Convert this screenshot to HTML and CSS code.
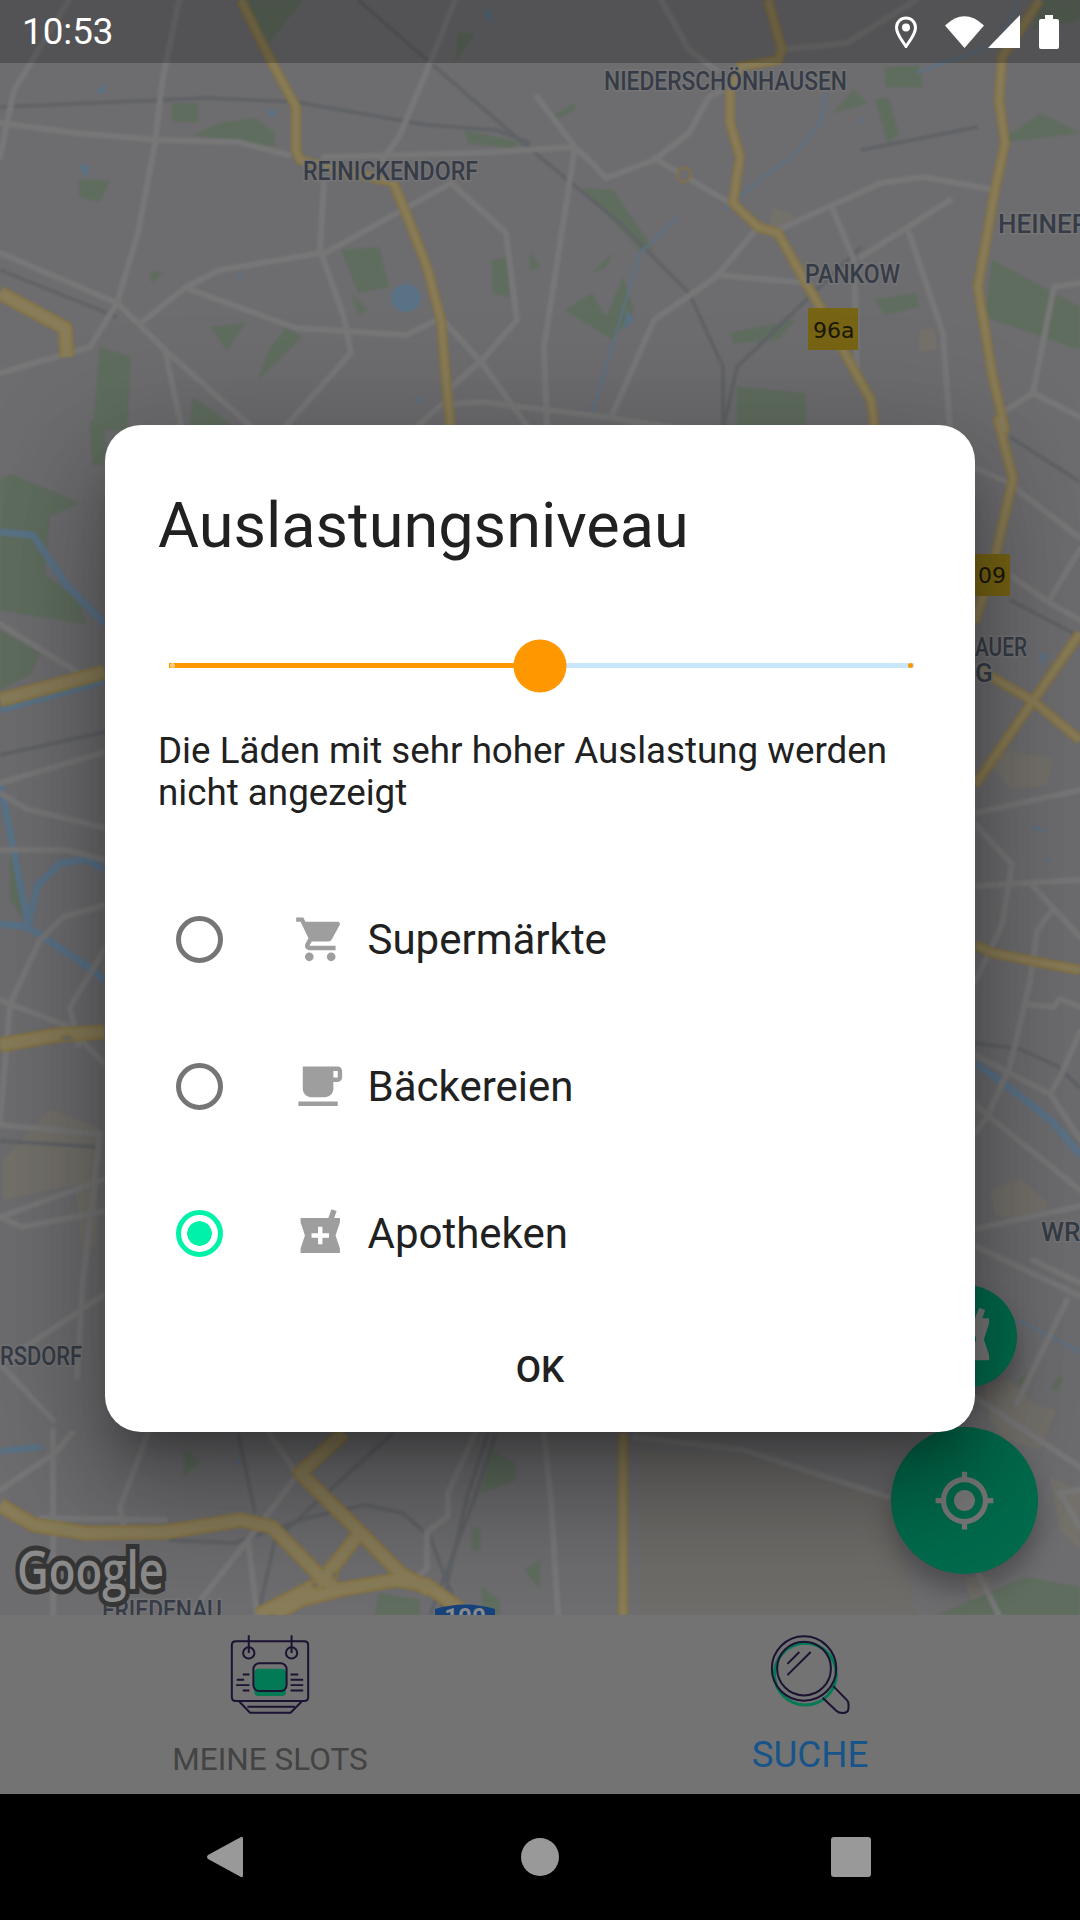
FILE: index.html
```html
<!DOCTYPE html>
<html lang="de">
<head>
<meta charset="utf-8">
<title>Auslastungsniveau</title>
<link rel="stylesheet" href="styles.css">
</head>
<body>
<div class="screen">
  <main class="map-area">
    <svg class="map" viewBox="0 0 1080 1615" width="1080" height="1615" xmlns="http://www.w3.org/2000/svg">
      <defs>
        <g id="highways">
          <path d="M241 0L268 55 296 107 296 150 300 160 330 168 393 182 406 213 427 267 441 320 446 380 451 430"/>
          <path d="M768 0L782 50 778 60 740 67 730 93 730 123 740 157 733 203 758 227 778 233 806 283 820 307 854 370 871 400 875 430"/>
          <path d="M1040 0L1002 57 999 100 1005 143 995 190 978 287 992 373 1005 430 998 420 1013 479 997 549 975 622"/>
          <path d="M1080 633L1033 701 975 785"/>
          <path d="M975 667L1033 701 1080 740"/>
          <path d="M975 945L993 953 1037 962 1080 970"/>
          <path d="M623 1433V1615"/>
        </g>
        <g id="highways-wide">
          <path d="M0 293L65 328 67 357"/>
          <path d="M0 700L105 672"/>
          <path d="M0 1045L57 1035 105 1032"/>
          <path d="M0 1505L34 1525 86 1533 165 1532 241 1520 272 1527 317 1573 337 1590 396 1580 427 1585 461 1610"/>
          <path d="M344 1433L300 1473 355 1527 400 1573 430 1590"/>
          <path d="M362 1530L320 1583 258 1615"/>
          <path d="M340 1590L300 1600 275 1615"/>
        </g>
      </defs>
      <g class="map-base">
      <rect class="land" x="-20" y="-20" width="1120" height="1655"/>

      <g class="sand">
        <path d="M3 1160L50 1109 100 1128 97 1243 83 1255 75 1185 3 1200Z"/>
        <path d="M987 760L1010 751 1053 758 1048 785 1010 790Z"/>
        <path d="M990 1190L1020 1178 1050 1205 1030 1220 995 1215Z"/>
        <path d="M983 1385L1010 1380 1035 1405 1057 1410 1040 1450 1005 1440 990 1420Z"/>
        <path d="M1050 1477L1080 1490V1550L1060 1530Z"/>
        <path d="M964 1577H990V1615H975Z"/>
        <path d="M772 207L795 215 780 235 770 225Z"/>
        <path d="M920 330L935 328 937 350 918 352Z"/>
      </g>
      <path class="sand-soft" d="M640 1452L745 1455 895 1500 916 1615H640Z"/>

      <g class="park">
        <path d="M172 103H198V122H172Z"/><path d="M220 123L255 118 275 133 275 147 193 135Z"/>
        <path d="M79 180H110L100 202 79 197Z"/><path d="M341 250L379 247 389 287 358 293 348 267Z"/>
        <path d="M351 293L368 310 358 315Z"/><path d="M210 327L245 323 227 350Z"/>
        <path d="M286 328L302 337 258 380 269 350Z"/><path d="M100 347L131 357 127 430H93Z"/>
        <path d="M193 397L238 430H189Z"/><path d="M465 130L523 143 510 148 468 143Z"/>
        <path d="M551 117L575 103 575 110 558 118Z"/><path d="M582 188L613 190 654 250 640 250Z"/>
        <path d="M606 267L613 253 592 273Z"/><path d="M565 310L592 293 606 317 623 277 634 310 613 340Z"/>
        <path d="M737 387L806 393V430H737Z"/><path d="M875 300L916 293 919 307 885 315Z"/>
        <path d="M875 100L888 97 899 133 888 143Z"/><path d="M885 67L919 65 923 87 885 87Z"/>
        <path d="M854 90L868 103 833 113Z"/><path d="M992 260L1080 307V350L985 317Z"/>
        <path d="M1040 113L1080 133 999 143Z"/><path d="M1040 0H1080V20L1033 30Z"/>
        <path d="M248 0H303L269 43 255 20Z"/><path d="M458 33H475L455 63Z"/>
        <path d="M730 333L795 320 778 340 733 343Z"/><path d="M151 270L164 273 151 283Z"/>
        <path d="M530 252L540 267 530 270Z"/><path d="M492 260L506 257 510 297 492 293Z"/>
        <path d="M0 480L10 474 80 503 50 516 45 575 80 600 85 624 0 610Z"/>
        <path d="M0 630L40 653 30 675 0 690Z"/><path d="M90 420H105V465H92Z"/>
        <path d="M10 850L20 890 28 925 10 900Z"/>
        <path d="M184 1448L200 1462 184 1477Z"/><path d="M492 1450L515 1463 517 1480 480 1493Z"/>
        <path d="M472 1528H480V1550H472Z"/><path d="M379 1593L420 1600V1615H375Z"/>
        <path d="M525 1570L540 1560V1590Z"/><path d="M482 1587L500 1600V1615H482Z"/>
        <path d="M937 1615L1026 1577 1080 1587V1615Z"/>
        <path d="M1017 1383L1027 1373 1023 1387Z"/><path d="M1050 1388L1060 1375 1063 1380 1057 1390Z"/>
      </g>

      <g class="rail">
        <path d="M358 0L523 143 620 223 689 293 723 367 723 430"/>
        <path d="M0 107L207 98 296 102 427 125 496 130 530 143"/>
        <path d="M0 270L117 317"/>
        <path d="M723 430L737 367 861 247"/>
        <path d="M861 150L978 127"/>
        <path d="M0 755L105 732"/>
        <path d="M0 1141L100 1147"/>
        <path d="M975 1043L1020 1049 1057 1066 1080 1088"/>
        <path d="M1010 437L1080 482"/>
        <path d="M1010 600L1073 633"/>
        <path d="M238 1433L255 1513"/>
        <path d="M393 1433L275 1540 258 1615"/>
        <path d="M496 1433L475 1497 430 1615"/>
        <path d="M488 1433L467 1497 440 1615"/>
        <path d="M169 1540L234 1543 310 1517 365 1505 403 1513 430 1537 455 1603"/>
      </g>

      <g class="river">
        <path d="M0 532L33 535 67 586 105 624"/>
        <path d="M0 710L105 681"/>
        <path d="M0 783L13 847 28 924"/>
        <path d="M0 924L28 927 90 968 105 981"/>
        <path d="M28 927L37 886 60 863 87 860 105 870"/>
        <path d="M975 1063L1003 1083 1053 1122 1080 1155"/>
      </g>
      <g class="stream">
        <path d="M723 210L799 150 820 123 826 93"/>
        <path d="M916 73L999 43 1019 0"/>
        <path d="M678 217L640 253 592 413"/>
        <path d="M1017 1320L1080 1352"/>
      </g>
      <g class="water">
        <path d="M486 8L492 12 492 22 486 18Z"/><path d="M97 93L103 83 106 93Z"/>
        <path d="M269 110H275V117H269Z"/><path d="M79 165H90L86 178Z"/>
        <path d="M238 273L244 278 238 279Z"/><ellipse cx="406" cy="298" rx="15" ry="14"/>
        <path d="M627 310L634 320 623 330Z"/><path d="M417 397H420V403H417Z"/>
        <path d="M864 118L861 127 861 118Z"/><path d="M0 1448L40 1444 44 1450 0 1454Z"/>
        <path d="M1040 655L1050 652 1040 665Z"/><path d="M1033 825L1048 832 1033 830Z"/>
        <path d="M1043 860L1050 858 1048 862Z"/><path d="M235 1460L240 1458 238 1468Z"/>
        <path d="M870 1485L876 1490 870 1495Z"/>
      </g>

      <g class="road">
        <path d="M0 123L76 133 158 140 238 142 289 155"/>
        <path d="M324 157L475 153 575 147 592 163 606 178 654 160 689 133 709 97 723 90"/>
        <path d="M179 0L162 83 155 143 138 233 117 303 90 347 0 373"/>
        <path d="M69 0L14 90 7 123 0 157"/>
        <path d="M455 0L430 63 399 137 382 160"/>
        <path d="M324 182L320 250 344 317 351 353 282 430"/>
        <path d="M451 183L327 252 220 270 186 287 141 323"/>
        <path d="M451 183L506 233 517 320 482 360 448 390"/>
        <path d="M0 253L117 303 165 350 255 430"/>
        <path d="M186 288L296 328 406 335 441 318 482 363 530 430"/>
        <path d="M165 350L182 430"/>
        <path d="M575 147L544 347 547 430"/>
        <path d="M537 97L575 147"/>
        <path d="M661 0L689 50 716 70"/>
        <path d="M654 158L730 203"/>
        <path d="M758 227L716 277 654 320 613 413"/>
        <path d="M778 230L881 183 923 177 995 190"/>
        <path d="M950 200L861 257"/>
        <path d="M833 210L854 260 857 367"/>
        <path d="M716 275L806 283"/>
        <path d="M909 233L943 333 950 430"/>
        <path d="M413 430L441 405 482 402 606 417 689 430"/>
        <path d="M1080 283L1054 287 1033 393 1002 413"/>
        <path d="M1033 393L1080 417"/>
        <path d="M778 50L847 43 916 0"/>
        <path d="M975 468L1007 482 1080 538"/>
        <path d="M1013 577L1048 602 1080 549"/>
        <path d="M1048 602L1080 620"/>
        <path d="M975 813L1080 790"/>
        <path d="M975 886L1080 880"/>
        <path d="M975 824L1012 864 1002 925 975 982"/>
        <path d="M1033 886L1080 937"/>
        <path d="M1053 909L1037 931 1030 982 1010 1066 987 1117 975 1133"/>
        <path d="M1025 1004L1053 1007 1060 999 1080 1007"/>
        <path d="M1080 1032L1060 1077 1050 1094"/>
        <path d="M975 1055L1050 1094 1080 1139"/>
        <path d="M975 1105L1080 1190"/>
        <path d="M975 1229L1080 1206"/>
        <path d="M975 1246L1080 1296"/>
        <path d="M1033 1260L1080 1283"/>
        <path d="M1067 1300L1017 1403"/>
        <path d="M975 1397L1080 1467"/>
        <path d="M1080 1490L1060 1493 1080 1527"/>
        <path d="M978 1573L999 1615"/>
        <path d="M0 624L77 672"/>
        <path d="M0 783L105 752"/>
        <path d="M0 793L27 809 105 828"/>
        <path d="M0 850L67 850 105 860"/>
        <path d="M0 1000L67 1026 105 1064"/>
        <path d="M40 940L10 1004 0 1121"/>
        <path d="M40 940L63 917 105 905"/>
        <path d="M105 949L70 1007 78 1045"/>
        <path d="M0 1125L100 1134"/>
        <path d="M0 1217L105 1179"/>
        <path d="M0 1217L22 1227 105 1211"/>
        <path d="M100 1134L83 1281 77 1377"/>
        <path d="M0 1364L105 1294"/>
        <path d="M0 1364L53 1420"/>
        <path d="M53 1430V1615"/>
        <path d="M0 1490L55 1453 72 1433"/>
        <path d="M148 1433L120 1507 124 1527"/>
        <path d="M41 1518L165 1520"/>
        <path d="M269 1433L296 1473"/>
        <path d="M296 1477L248 1540 203 1597 193 1615"/>
        <path d="M248 1540L257 1615"/>
        <path d="M475 1433L448 1493 448 1516 427 1532 427 1568 410 1585"/>
        <path d="M544 1433L551 1500 558 1615"/>
        <path d="M634 1437L744 1450 888 1497"/>
      </g>
      <circle class="roundabout" cx="684" cy="175" r="7"/>

      <use href="#highways" class="hw-edge"/>
      <use href="#highways" class="hw-fill"/>
      <use href="#highways-wide" class="hw-edge-wide"/>
      <use href="#highways-wide" class="hw-fill-wide"/>
      <ellipse class="roundabout" cx="67" cy="1038" rx="6" ry="3"/>
      <ellipse class="roundabout" cx="315" cy="1585" rx="3" ry="3"/>
      <ellipse class="roundabout" cx="335" cy="1575" rx="3" ry="3"/>
      </g>

      <g class="label">
        <text x="604" y="90" textLength="243" lengthAdjust="spacingAndGlyphs">NIEDERSCHÖNHAUSEN</text>
        <text x="303" y="180" textLength="175" lengthAdjust="spacingAndGlyphs">REINICKENDORF</text>
        <text x="805" y="283" textLength="95" lengthAdjust="spacingAndGlyphs">PANKOW</text>
        <text x="998" y="233">HEINERS</text>
        <text x="975" y="656" textLength="52" lengthAdjust="spacingAndGlyphs">AUER</text>
        <text x="975" y="682">G</text>
        <text x="1041" y="1241">WR</text>
        <text x="0" y="1365" textLength="82" lengthAdjust="spacingAndGlyphs">RSDORF</text>
        <text x="102" y="1619" textLength="120" lengthAdjust="spacingAndGlyphs">FRIEDENAU</text>
      </g>

      <rect class="shield" x="808" y="308" width="50" height="42"/>
      <text class="shield-text" x="813" y="338">96a</text>
      <rect class="shield" x="960" y="554" width="50" height="42"/>
      <text class="shield-text" x="978" y="583">09</text>
      <path class="shield-blue" d="M435 1609Q465 1600 495 1609V1615H435Z"/>
      <text class="shield-blue-text" x="465" y="1625">100</text>

      <text class="google" x="17" y="1589" textLength="147" lengthAdjust="spacingAndGlyphs">Google</text>
    </svg>

    <button class="fab fab-small" aria-label="Apotheken">
      <svg class="fab-glyph" viewBox="0 0 24 24"><path d="M21 5h-2.64l1.14-3.14L17.15 1l-1.46 4H3v2l2 6-2 6v2h18v-2l-2-6 2-6V5zm-5 9h-3v3h-2v-3H8v-2h3V9h2v3h3v2z"/></svg>
    </button>
    <button class="fab fab-large" aria-label="Standort">
      <svg class="fab-glyph" viewBox="0 0 24 24"><path d="M12 8c-2.21 0-4 1.79-4 4s1.79 4 4 4 4-1.79 4-4-1.79-4-4-4zm8.94 3c-.46-4.17-3.77-7.48-7.94-7.94V1h-2v2.06C6.83 3.52 3.52 6.83 3.06 11H1v2h2.06c.46 4.17 3.77 7.48 7.94 7.94V23h2v-2.06c4.17-.46 7.48-3.77 7.94-7.94H23v-2h-2.06zM12 19c-3.87 0-7-3.13-7-7s3.13-7 7-7 7 3.13 7 7-3.13 7-7 7z"/></svg>
    </button>
  </main>

  <nav class="tabs">
    <div class="tab">
      <svg class="tab-icon" viewBox="90 68 240 244" fill="none">
        <rect class="ico-green" x="163" y="173" width="95" height="82" rx="12"/>
        <g class="ico-line">
          <path d="M107 90H313Q325 90 325 102V258Q325 270 313 270H107Q95 270 95 258V102Q95 90 107 90Z"/>
          <circle cx="146" cy="125" r="17"/><circle cx="275" cy="125" r="17"/>
          <path d="M146 72V125M275 72V125"/>
          <rect x="160" y="156" width="100" height="84" rx="18"/>
          <path d="M128 190H148M110 206H132M108 222H148M128 238H148M272 190H295M272 206H310M272 222H310M272 238H310"/>
          <path d="M118 272L150 305H272L305 272M142 287H285"/>
        </g>
      </svg>
      <span class="tab-label">MEINE SLOTS</span>
    </div>
    <div class="tab tab-active">
      <svg class="tab-icon" viewBox="120 68 240 244" fill="none">
        <circle class="ico-green-ring" cx="226" cy="189" r="93"/>
        <g class="ico-line">
          <circle cx="222" cy="172" r="97"/>
          <circle cx="222" cy="172" r="81"/>
          <path d="M310 225L352 268Q356 273 356 280V290Q356 306 338 306 326 306 320 300L278 260"/>
          <path d="M172 158L208 122M172 192L242 122"/>
        </g>
      </svg>
      <span class="tab-label">SUCHE</span>
    </div>
  </nav>

  <footer class="android-nav">
    <svg class="nav-back" viewBox="0 0 36 42"><path d="M34 1Q36 0 36 3V39Q36 42 34 41L1 23Q-1 21 1 19Z"/></svg>
    <span class="nav-home"></span>
    <span class="nav-recent"></span>
  </footer>

  <header class="status">
    <span class="status-time">10:53</span>
    <div class="status-icons">
      <svg class="st-pin" viewBox="0 0 22 32"><path class="st-outline" d="M11 30.5C7 24 1.5 18.500 1.500 11.500A9.500 9.500 0 0 1 20.500 11.500C20.500 18.500 15 24 11 30.500Z"/><circle class="st-fill" cx="11" cy="11.500" r="4"/></svg>
      <svg class="st-wifi" viewBox="0 0 39 32"><path class="st-fill" d="M19.500 32L0 9.500Q19.500 -9 39 9.500Z"/></svg>
      <svg class="st-signal" viewBox="0 0 32 33"><path class="st-fill" d="M0 33L32 0V33Z"/></svg>
      <svg class="st-battery" viewBox="0 0 20 34"><path class="st-fill" d="M6 0H14V4H18Q20 4 20 6V32Q20 34 18 34H2Q0 34 0 32V6Q0 4 2 4H6Z"/></svg>
    </div>
  </header>

  <div class="overlay">
    <section class="dialog">
      <h1 class="dialog-title">Auslastungsniveau</h1>
      <div class="slider">
        <div class="track">
          <div class="track-fill" style="width:49.8%"></div>
          <div class="track-rest"></div>
          <i class="tick tick-start"></i>
          <i class="tick tick-end"></i>
          <i class="thumb" style="left:49.8%"></i>
        </div>
      </div>
      <p class="dialog-text">Die Läden mit sehr hoher Auslastung werden nicht angezeigt</p>
      <ul class="options">
        <li class="option">
          <span class="radio"></span>
          <svg class="option-icon" viewBox="0 0 24 24"><path d="M7 18c-1.100 0-1.990.9-1.990 2S5.900 22 7 22s2-.9 2-2-.9-2-2-2zM1 2v2h2l3.600 7.590-1.350 2.450c-.16.28-.25.61-.25.96 0 1.100.9 2 2 2h12v-2H7.420c-.14 0-.25-.11-.25-.25l.03-.12.9-1.630h7.450c.75 0 1.410-.41 1.750-1.030l3.580-6.470c.08-.14.12-.31.12-.48 0-.55-.45-1-1-1H5.210l-.94-2H1zm16 16c-1.100 0-1.990.9-1.990 2s.89 2 1.990 2 2-.9 2-2-.9-2-2-2z"/></svg>
          <span class="option-label">Supermärkte</span>
        </li>
        <li class="option">
          <span class="radio"></span>
          <svg class="option-icon" viewBox="0 0 24 24"><path d="M20 3H4v10c0 2.210 1.790 4 4 4h6c2.210 0 4-1.790 4-4v-3h2c1.110 0 2-.89 2-2V5c0-1.110-.89-2-2-2zm0 5h-2V5h2v3zM2 21h18v-2H2v2z"/></svg>
          <span class="option-label">Bäckereien</span>
        </li>
        <li class="option">
          <span class="radio radio-on"></span>
          <svg class="option-icon" viewBox="0 0 24 24"><path d="M21 5h-2.640l1.140-3.140L17.150 1l-1.460 4H3v2l2 6-2 6v2h18v-2l-2-6 2-6V5zm-5 9h-3v3h-2v-3H8v-2h3V9h2v3h3v2z"/></svg>
          <span class="option-label">Apotheken</span>
        </li>
      </ul>
      <div class="actions"><span class="ok">OK</span></div>
    </section>
  </div>
</div>
</body>
</html>
```
FILE: styles.css
```css
* { box-sizing: border-box; }
html, body { margin: 0; padding: 0; }
body { font-family: Roboto, "Noto Sans", sans-serif; background: #000; }

.screen {
  position: relative;
  width: 1080px;
  height: 1920px;
  overflow: hidden;
  display: flex;
  flex-direction: column;
}

/* map */
.map-area { position: relative; height: 1615px; flex: none; }
.map { display: block; }
.map-base { filter: blur(0.8px); }
.land { fill: #6d6c6f; }
.sand path { fill: #74716b; }
.sand-soft { fill: #6e6c69; }
.park path { fill: #5f6d5e; }
.water path, .water ellipse { fill: #5a7286; }
.road path { fill: none; stroke: #777778; stroke-width: 6; stroke-linejoin: round; stroke-linecap: round; }
.rail path { fill: none; stroke: #5f6266; stroke-width: 3.500; stroke-linejoin: round; }
.river path { fill: none; stroke: #5a7388; stroke-width: 7; stroke-linejoin: round; }
.stream path { fill: none; stroke: #5a7388; stroke-width: 2; stroke-linejoin: round; }
.hw-edge { fill: none; stroke: #857445; stroke-width: 10; stroke-linejoin: round; }
.hw-fill { fill: none; stroke: #887c59; stroke-width: 5; stroke-linejoin: round; }
.hw-edge-wide { fill: none; stroke: #857445; stroke-width: 15; stroke-linejoin: round; }
.hw-fill-wide { fill: none; stroke: #887c59; stroke-width: 10; stroke-linejoin: round; }
.roundabout { fill: #6d6c6f; stroke: #857445; stroke-width: 2; }
.label text {
  font: 500 26px Roboto, sans-serif;
  fill: #363c47;
  stroke: #757475;
  stroke-width: 3px;
  paint-order: stroke;
}
.shield { fill: #776414; }
.shield-text { font: 400 22px "DejaVu Sans", sans-serif; fill: #1a1808; }
.shield-blue { fill: #17417a; }
.shield-blue-text { font: 700 24px Roboto, sans-serif; fill: #8a8a8a; text-anchor: middle; }
.google {
  font: 600 52px "Open Sans", sans-serif;
  fill: #8b8b8b;
  stroke: #363636;
  stroke-width: 10px;
  paint-order: stroke;
}

/* floating buttons */
.fab {
  position: absolute;
  display: flex;
  align-items: center;
  justify-content: center;
  padding: 0;
  border: 0;
  border-radius: 50%;
  background: #016c4d;
  box-shadow: 0 16px 26px rgba(0, 0, 0, 0.28);
}
.fab-small { left: 914px; top: 1285px; width: 103px; height: 103px; }
.fab-large { left: 891px; top: 1427px; width: 147px; height: 147px; }
.fab-glyph { width: 63px; height: 63px; fill: #7a7a7a; }

/* bottom tabs */
.tabs {
  flex: none;
  height: 179px;
  display: flex;
  background: #737373;
}
.tab {
  flex: 1;
  display: flex;
  flex-direction: column;
  align-items: center;
  padding-top: 19px;
}
.tab-icon { display: block; width: 80px; height: 81px; }
.tab-label {
  margin-top: 25px;
  font-size: 31.500px;
  line-height: 40px;
  color: #434343;
}
.tab-active .tab-label {
  margin-top: 20px;
  font-size: 36.750px;
  color: #17548a;
}
.ico-line { stroke: #1c1232; stroke-width: 6; fill: none; }
.ico-green { fill: #017a55; }
.ico-green-ring { stroke: #017a55; stroke-width: 9; }

/* android navigation */
.android-nav {
  flex: none;
  height: 126px;
  display: flex;
  align-items: center;
  background: #000;
}
.nav-back { width: 36px; height: 42px; margin-left: 207px; fill: #999; }
.nav-home { width: 38px; height: 38px; margin-left: 278px; border-radius: 50%; background: #999; }
.nav-recent { width: 40px; height: 40px; margin-left: 272px; border-radius: 3px; background: #999; }

/* status bar */
.status {
  position: absolute;
  left: 0;
  top: 0;
  width: 1080px;
  height: 63px;
  display: flex;
  align-items: center;
  justify-content: space-between;
  padding: 0 21px 0 22px;
  background: rgba(0, 0, 0, 0.23);
  color: #fff;
  z-index: 2;
}
.status-time { font-size: 36.750px; line-height: 63px; }
.status-icons { display: flex; align-items: center; }
.status-icons svg { display: block; }
.st-pin { width: 22px; height: 32px; }
.st-wifi { width: 39px; height: 32px; margin-left: 28px; }
.st-signal { width: 32px; height: 33px; margin-left: 4px; }
.st-battery { width: 20px; height: 34px; margin-left: 19px; }
.st-fill { fill: #fff; }
.st-outline { fill: none; stroke: #fff; stroke-width: 3; }

/* dialog */
.overlay {
  position: absolute;
  left: 0;
  top: 0;
  width: 1080px;
  display: flex;
  justify-content: center;
  padding-top: 425px;
  z-index: 1;
}
.dialog {
  width: 870px;
  height: 1007px;
  padding-top: 59px;
  border-radius: 36px;
  background: #fff;
  color: #212121;
  box-shadow: 0 29px 39px -18px rgba(0, 0, 0, 0.28), 0 63px 100px 8px rgba(0, 0, 0, 0.22), 0 24px 121px 21px rgba(0, 0, 0, 0.16);
}
.dialog-title {
  margin: 0;
  padding-left: 53px;
  font-size: 63px;
  font-weight: 400;
  line-height: 84px;
}
.slider {
  height: 105px;
  margin-top: 45px;
  padding: 0 61px 0 64px;
  display: flex;
  align-items: center;
}
.track { position: relative; width: 100%; height: 5px; display: flex; }
.track-fill { background: #ff9800; }
.track-rest { flex: 1; background: #c8e6fc; }
.tick { position: absolute; top: 0; width: 5px; height: 5px; border-radius: 50%; }
.tick-start { left: 1px; background: #ffcc80; }
.tick-end { right: 1px; background: #ff9800; }
.thumb {
  position: absolute;
  top: 50%;
  width: 53px;
  height: 53px;
  border-radius: 50%;
  background: #ff9800;
  transform: translate(-50%, -50%);
}
.dialog-text {
  margin: 12px 0 0;
  padding: 0 53px;
  font-size: 36.750px;
  line-height: 42px;
}
.options { list-style: none; margin: 52px 0 0; padding: 0; }
.option {
  height: 147px;
  display: flex;
  align-items: center;
  padding-left: 71px;
}
.radio {
  flex: none;
  width: 47px;
  height: 47px;
  border: 5px solid #757575;
  border-radius: 50%;
}
.radio-on {
  border-color: #00f2a9;
  background: radial-gradient(circle, #00f2a9 12px, transparent 12.500px);
}
.option-icon { flex: none; width: 52.500px; height: 52.500px; margin-left: 71px; fill: #9e9e9e; }
.option-label { margin-left: 21px; font-size: 42px; line-height: 50px; }
.actions { height: 124px; display: flex; align-items: center; justify-content: center; }
.ok { font-size: 36.750px; font-weight: 500; }
```
